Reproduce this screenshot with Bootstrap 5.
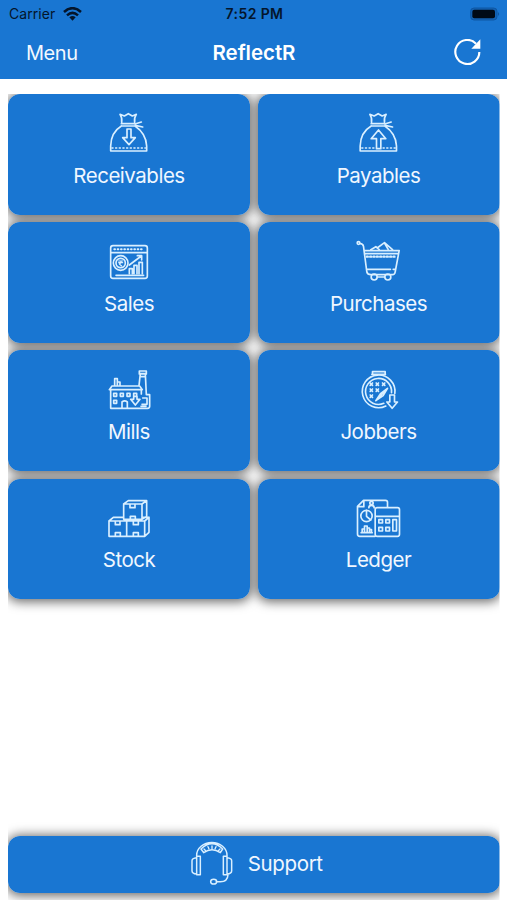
<!DOCTYPE html>
<html lang="en">
<head>
<meta charset="utf-8">
<meta name="viewport" content="width=device-width, initial-scale=1">
<title>ReflectR</title>
<link href="https://cdn.jsdelivr.net/npm/bootstrap@5.3.0/dist/css/bootstrap.min.css" rel="stylesheet">
<style>
body{font-family:Inter,"Liberation Sans",sans-serif;background:#fff;height:900px;overflow:hidden}
.app-head{background:#1976d2;height:79px}
.status{height:27px;padding:0 7px 0 9px;font-size:14px;color:#04152b}
.status>*,.bar>*{flex:1 1 0}
.status .clock{font-weight:600;font-size:14px;letter-spacing:.4px}
.carrier{letter-spacing:.05px}
.bar{height:52px;padding:0 25px 0 26px;color:#fff;font-size:20px}
.bar .title{font-weight:600;font-size:20.5px;letter-spacing:-.05px}
.menu-btn{letter-spacing:-.45px;color:#f2f8ff}
.tiles{display:grid;grid-template-columns:1fr 1fr;gap:7.5px;margin:15px 7.5px 0 8px;isolation:isolate;clip-path:inset(0 0 -24px 0)}
.tile{height:120.700px;border-radius:12px;background:#1976d2;color:#f0f7ff;font-size:20.5px;letter-spacing:-.48px;line-height:24px;padding-top:11px;position:relative}
.tile::before,.support::before{content:"";position:absolute;inset:0;border-radius:12px;box-shadow:0 1px 11px 2px rgba(0,0,0,.58);z-index:-1}
.tile svg{width:60px;height:55px;overflow:visible;margin-bottom:3.500px}
.ico{fill:none;stroke:#d9efff;stroke-width:5;stroke-linecap:round;stroke-linejoin:round}
.support-wrap{margin:0 7.5px 7.5px 8px;isolation:isolate;clip-path:inset(-24px 0 -8px 0)}
.support{height:57px;border-radius:12px;background:#1976d2;color:#f0f7ff;font-size:20.5px;letter-spacing:-.35px;position:relative;padding-left:5px}
</style>
<script src="https://cdn.jsdelivr.net/npm/bootstrap@5.3.0/dist/js/bootstrap.bundle.min.js"></script>
</head>
<body class="d-flex flex-column">
<header class="app-head">
  <div class="status d-flex align-items-center">
    <div class="d-flex align-items-center gap-2"><span class="carrier">Carrier</span>
      <svg width="19" height="14" viewBox="0 0 57 42"><g fill="none" stroke="#04152b" stroke-width="7.500"><path d="M3 15Q28.500-8 54 15"/><path d="M12 25Q28.500 10 45 25"/></g><path d="M19 31Q28.500 23 38 31L28.500 41Z" fill="#04152b"/></svg>
    </div>
    <div class="clock text-center">7:52 PM</div>
    <div class="d-flex justify-content-end"><svg width="30" height="14" viewBox="0 0 90 42"><rect x="2" y="3" width="79" height="36" rx="10" fill="#1262b5" stroke="#0f57a2" stroke-width="3"/><rect x="7" y="8" width="68" height="26" rx="6" fill="#000a16"/><path d="M84 15Q91 21 84 27Z" fill="#0f57a2"/></svg></div>
  </div>
  <nav class="bar d-flex align-items-center">
    <div class="menu-btn">Menu</div>
    <div class="title text-center">ReflectR</div>
    <div class="d-flex justify-content-end"><svg width="28" height="28" viewBox="0 0 84 84"><path d="M76 39A36 36 0 1 1 66 14" fill="none" stroke="#fff" stroke-width="6.500"/><path d="M79 1V29H52Z" fill="#fff"/></svg></div>
  </nav>
</header>
<main class="tiles">
  <div class="tile d-flex flex-column align-items-center">
    <svg class="ico" viewBox="3 0 180 165"><path d="M71 52Q73 38 66 28L79 33L91 26L103 33L115 28Q108 38 110 52M70 56H111M72 63H110M70 63Q39 82 38 123V138H146V123Q144 85 111 63M111 57L130 51M112 61L134 66"/><path d="M87 72H99V98H112L93 119L74 98H87Z"/><path d="M42 129H142" stroke-dasharray="3 8"/></svg>
    <span>Receivables</span></div>
  <div class="tile d-flex flex-column align-items-center">
    <svg class="ico" viewBox="1.500 0 180 165"><path d="M69 52Q71 38 64 28L77 33L89 26L101 33L113 28Q106 38 108 52M68 56H109M70 63H108M68 63Q36 82 35 123V138H144V123Q142 85 109 63M109 57L128 51M110 61L132 66"/><path d="M84 131V101H68L90 75L112 101H97V131Z"/><path d="M40 129H78M104 129H142" stroke-dasharray="3 8"/></svg>
    <span>Payables</span></div>
  <div class="tile d-flex flex-column align-items-center">
    <svg class="ico" viewBox="3 -6 180 165"><rect x="38" y="32" width="110" height="98" rx="7"/><path d="M40 53H146M54 121H137"/><path d="M49 43H139" stroke-dasharray="2 8" stroke-width="6"/><circle cx="68" cy="84" r="22"/><circle cx="68" cy="84" r="14"/><path d="M62 78H74M62 83H74M64 78Q76 80 64 87L71 93" stroke-width="3.500"/><path d="M94 116V101H103V116M108 116V91H117V116M123 116V82H133V116M94 90L130 63M118 62H131V75"/></svg>
    <span>Sales</span></div>
  <div class="tile d-flex flex-column align-items-center">
    <svg class="ico" viewBox="1.500 -6 180 165"><circle cx="30" cy="24" r="4"/><path d="M34 25Q44 26 45 34L55 111Q57 119 67 119H132Q139 119 140 111L152 47H48M50 56H149"/><path d="M55 65H143" stroke-dasharray="3 7" stroke-width="7"/><path d="M56 103H126M134 103H139M67 44L82 35L92 44M86 39L108 23L132 44M108 24L119 43"/><circle cx="77" cy="126" r="9"/><circle cx="118" cy="126" r="9"/><path d="M87 126H108"/></svg>
    <span>Purchases</span></div>
  <div class="tile d-flex flex-column align-items-center">
    <svg class="ico" viewBox="3 -8 180 165"><path d="M34 78L42 67H125L133 78ZM38 79V134H149Q155 134 155 128V93H145L142 30H127L123 66M124 22H145V31H124ZM129 39H140M50 64V45H58V64M58 55H66V65M130 78V91"/><path d="M47 89H56V98H47ZM67 89H76V98H67ZM87 89H96V98H87ZM107 89H116V98H107ZM47 110H56V119H47ZM72 132V115Q80 108 88 115V132M107 98V107H98L112 124L126 107H117V98M134 103H147V122H132M129 128H144"/></svg>
    <span>Mills</span></div>
  <div class="tile d-flex flex-column align-items-center">
    <svg class="ico" viewBox="1.500 -8 180 165"><path d="M72 31V24H110V31M70 32H111"/><path d="M139 89A49 49 0 1 0 112 127"/><path d="M129 87A39 39 0 1 0 106 119"/><g><path d="M65 58l7 7m0-7l-7 7M83 58l7 7m0-7l-7 7M102 58l7 7m0-7l-7 7M65 76l7 7m0-7l-7 7M83 76l7 7m0-7l-7 7M65 94l7 7m0-7l-7 7"/></g><path d="M82 111L96 90L117 74L104 96ZM85 108L110 81M124 94H138V115H147L131 134L115 115H124Z"/></svg>
    <span>Jobbers</span></div>
  <div class="tile d-flex flex-column align-items-center">
    <svg class="ico" viewBox="3 -6 180 165"><path d="M77 36H132V82H77ZM77 36L91 26H146L132 36M146 26V73L132 82M33 87H86V133H33ZM86 87H140V133H86ZM33 87L46 76H76M86 87L94 82M140 87L153 76V121L140 133M134 76H153M96 37V47H111V37M97 82V73H112V82M52 88V98H66V88M106 88V98H121V88M52 132V122H67V132M106 132V122H121V132"/></svg>
    <span>Stock</span></div>
  <div class="tile d-flex flex-column align-items-center">
    <svg class="ico" viewBox="1.500 -6 180 165"><path d="M80 133H34Q27 133 27 126V43L45 25H111Q117 25 117 31V45M28 44H46V26"/><rect x="80" y="47" width="73" height="86" rx="6"/><path d="M82 73H151M61 47Q61 40 69 40Q77 40 77 47"/><circle cx="69" cy="33" r="5"/><circle cx="54" cy="72" r="17"/><path d="M54 55V73L67 84M38 122H71M41 121V111H48V121M48 111V102H56V121M56 108H63V121M63 113H69V121"/><path d="M91 83H102V93H91ZM112 83H123V93H112ZM91 106H102V117H91ZM112 106H123V117H112ZM133 83H144V117H133Z"/></svg>
    <span>Ledger</span></div>
</main>
<footer class="support-wrap mt-auto">
  <div class="support d-flex align-items-center justify-content-center">
    <svg class="ico" width="44" height="46" viewBox="30 62 132 138" style="margin-right:14px"><path d="M50 108V105A45 38 0 0 1 141 105V108M63 86Q96 55 128 86L121 97Q96 80 71 97ZM50 108H61V163H50ZM50 112Q36 113 36 121V151Q36 160 50 161M130 108H141V163H130ZM141 112Q155 113 155 121V151Q155 160 141 161M144 163Q143 184 121 184H109" stroke-width="4.500"/><path d="M72 86L77 91M84 79L87 86M96 77V85M108 79L105 86M120 86L115 91" stroke-width="4"/><ellipse cx="101" cy="184" rx="9" ry="7" stroke-width="4.500"/></svg>
    <span>Support</span>
  </div>
</footer>
</body>
</html>
